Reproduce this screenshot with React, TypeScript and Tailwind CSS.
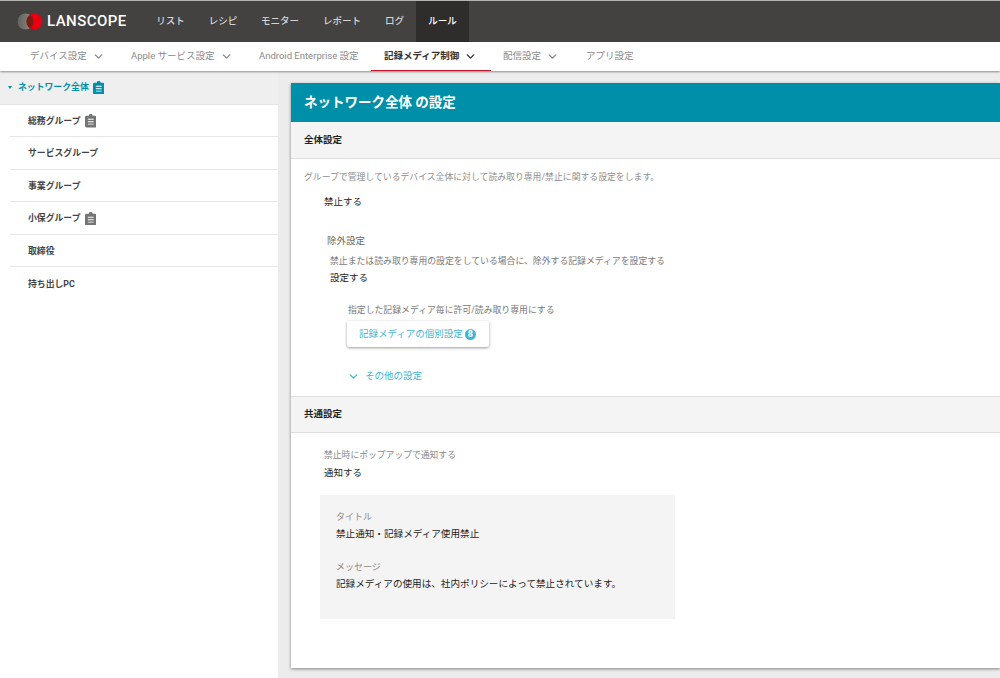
import { ChevronDown } from 'lucide-react'

const topMenu = ['リスト', 'レシピ', 'モニター', 'レポート', 'ログ']

const subMenu = [
  { label: 'デバイス設定', chevron: true, width: 'w-[101px]' },
  { label: 'Apple サービス設定', chevron: true, width: 'w-[128px]' },
  { label: 'Android Enterprise 設定', chevron: false, width: 'w-[125px]' },
  { label: '記録メディア制御', chevron: true, width: 'w-[119px]', active: true },
  { label: '配信設定', chevron: true, width: 'w-[83px]' },
  { label: 'アプリ設定', chevron: false, width: 'w-[80px]' },
]

const groups = [
  { name: '総務グループ', note: true },
  { name: 'サービスグループ' },
  { name: '事業グループ' },
  { name: '小保グループ', note: true },
  { name: '取締役' },
  { name: '持ち出しPC' },
]

function NoteIcon({ color }: { color: string }) {
  return (
    <svg width="11.5" height="13.500" viewBox="0 0 12 14" className="mb-[1px] shrink-0">
      <path d="M1.500 1.800H4a2 2 0 0 1 4 0h2.500A1.500 1.500 0 0 1 12 3.300v9.200a1.500 1.500 0 0 1-1.500 1.500h-9A1.500 1.500 0 0 1 0 12.500V3.300A1.500 1.500 0 0 1 1.500 1.800z" fill={color} />
      <path d="M3 5h6v1H3zM3 7.500h6v1H3zM3 10h6v1H3z" fill="#fff" />
    </svg>
  )
}

function Logo() {
  return (
    <svg width="26" height="17" viewBox="0 0 26 17" className="shrink-0">
      <defs>
        <linearGradient id="logoGrey" x1="0" x2="1" y1="0" y2="0">
          <stop offset="0" stopColor="#62635e" />
          <stop offset="1" stopColor="#8a8b86" />
        </linearGradient>
      </defs>
      <circle cx="8.500" cy="8.500" r="8" fill="url(#logoGrey)" />
      <circle cx="17.500" cy="8.500" r="8" fill="#e60012" />
      <path d="M13 1.900a8 8 0 0 1 0 13.200a8 8 0 0 1 0-13.200z" fill="#7a1c12" />
    </svg>
  )
}

function SectionHead({ title, height }: { title: string; height: string }) {
  return (
    <div className={`flex items-center border-b border-[#dedede] bg-[#f4f4f4] pl-[13px] text-[9.500px] font-bold text-[#222] ${height}`}>
      {title}
    </div>
  )
}

export default function App() {
  return (
    <div className="flex h-[678px] w-[1000px] flex-col overflow-hidden bg-[#ececec] font-['Roboto','Noto_Sans_CJK_JP',sans-serif]">
      <header className="flex h-[42px] shrink-0 border-t border-[#b5b5b2] bg-[#434240]">
        <div className="flex w-[144px] items-center pl-[17px]">
          <Logo />
          <span className="ml-[4px] text-[15px] font-medium tracking-[0.45px] text-white">LANSCOPE</span>
        </div>
        <nav className="flex text-[9.500px] font-medium text-[#d4d4d2]">
          <a className="flex w-[53px] items-center justify-center">{topMenu[0]}</a>
          <a className="flex w-[52px] items-center justify-center">{topMenu[1]}</a>
          <a className="flex w-[62px] items-center justify-center">{topMenu[2]}</a>
          <a className="flex w-[62px] items-center justify-center">{topMenu[3]}</a>
          <a className="flex w-[43px] items-center justify-center">{topMenu[4]}</a>
          <a className="flex w-[53px] items-center justify-center bg-[#2e2d2c] text-white">ルール</a>
        </nav>
      </header>

      <nav className="z-10 flex h-[29px] shrink-0 bg-white pl-[30px] shadow-[0_1px_2px_rgba(0,0,0,0.4)]">
        {subMenu.map(item => (
          <div
            key={item.label}
            className={`relative flex items-center whitespace-nowrap text-[9.500px] ${item.width} ${item.active ? 'font-bold text-[#333]' : 'text-[#8a8a8a]'}`}
          >
            <span className="mb-[1px] flex items-center">
              {item.label}
              {item.chevron && <ChevronDown size={13} strokeWidth={2.500} className={`ml-[5px] ${item.active ? 'text-[#333]' : 'text-[#888]'}`} />}
            </span>
            {item.active && <span className="absolute bottom-0 left-[-13px] right-[12px] h-[1.500px] bg-[#c5142a]" />}
          </div>
        ))}
      </nav>

      <div className="flex min-h-0 flex-1">
        <aside className="w-[278px] shrink-0 bg-white">
          <div className="flex h-[33.500px] items-center border-b border-[#e4e4e4] bg-[#efefef] pl-[8px] pt-[1px]">
            <svg width="4" height="3" viewBox="0 0 4 3" className="mr-[6px] shrink-0">
              <path d="M0 0h4L2 3z" fill="#0090aa" />
            </svg>
            <span className="mr-[4px] text-[8.850px] font-bold text-[#0090aa]">ネットワーク全体</span>
            <NoteIcon color="#0090aa" />
          </div>
          {groups.map(group => (
            <div key={group.name} className="ml-[10px] flex h-[32.500px] items-center border-b border-[#e6e6e6] pl-[18px] pt-[2px] last:border-b-0">
              <span className="mr-[4px] text-[8.850px] font-bold text-[#444]">{group.name}</span>
              {group.note && <NoteIcon color="#757575" />}
            </div>
          ))}
        </aside>

        <main className="min-w-0 flex-1 pl-[13px] pt-[12px]">
          <div className="h-[585px] bg-white shadow-[0_1px_3px_rgba(0,0,0,0.45)]">
            <div className="flex h-[39px] items-center bg-[#008fa9] pl-[13px] text-[13.500px] font-bold text-white">
              ネットワーク全体 の設定
            </div>
            <SectionHead title="全体設定" height="h-[37px]" />

            <div className="h-[237px] pt-[11px]">
              <p className="pl-[13px] text-[8.850px] leading-[14px] text-[#8e8e8e]">
                グループで管理しているデバイス全体に対して読み取り専用/禁止に関する設定をします。
              </p>
              <p className="mt-[11px] pl-[33px] text-[9.500px] leading-[14px] text-[#222]">禁止する</p>
              <p className="mt-[25px] pl-[36px] text-[9.500px] leading-[14px] text-[#666]">除外設定</p>
              <p className="mt-[6px] pl-[39px] text-[8.850px] leading-[14px] text-[#777]">
                禁止または読み取り専用の設定をしている場合に、除外する記録メディアを設定する
              </p>
              <p className="mt-[3px] pl-[39px] text-[9.500px] leading-[14px] text-[#222]">設定する</p>
              <div className="pl-[56px]">
                <p className="mt-[18px] pl-[1px] text-[8.850px] leading-[14px] text-[#777]">指定した記録メディア毎に許可/読み取り専用にする</p>
                <button className="mt-[4px] flex h-[26px] w-[142px] items-center rounded-[2px] bg-white pl-[12px] text-[9.500px] text-[#42b5d3] shadow-[0_1px_3px_rgba(0,0,0,0.4)]">
                  記録メディアの個別設定
                  <span className="ml-[2px] flex h-[11px] w-[11px] items-center justify-center rounded-full bg-[#42b5d3] text-[9px] font-bold leading-none text-white">8</span>
                </button>
                <div className="mt-[22px] flex items-center text-[9.500px] text-[#42b5d3]">
                  <ChevronDown size={13} strokeWidth={2.500} className="mr-[5px]" />
                  その他の設定
                </div>
              </div>
            </div>

            <div className="border-t border-[#dedede]">
              <SectionHead title="共通設定" height="h-[36px]" />
            </div>

            <div className="pl-[29px] pt-[15px]">
              <p className="pl-[4px] text-[8.800px] leading-[14px] text-[#8a8a8a]">禁止時にポップアップで通知する</p>
              <p className="mt-[4px] pl-[4px] text-[9.500px] leading-[14px] text-[#222]">通知する</p>
              <div className="mt-[15px] h-[124px] w-[355px] bg-[#f4f4f4] pl-[16px] pt-[15px]">
                <p className="text-[9px] leading-[14px] text-[#8a8a8a]">タイトル</p>
                <p className="mt-[3px] text-[9.600px] leading-[14px] text-[#222]">禁止通知・記録メディア使用禁止</p>
                <p className="mt-[19px] text-[9px] leading-[14px] text-[#8a8a8a]">メッセージ</p>
                <p className="mt-[3px] text-[9.600px] leading-[14px] text-[#222]">記録メディアの使用は、社内ポリシーによって禁止されています。</p>
              </div>
            </div>
          </div>
        </main>
      </div>
    </div>
  )
}
